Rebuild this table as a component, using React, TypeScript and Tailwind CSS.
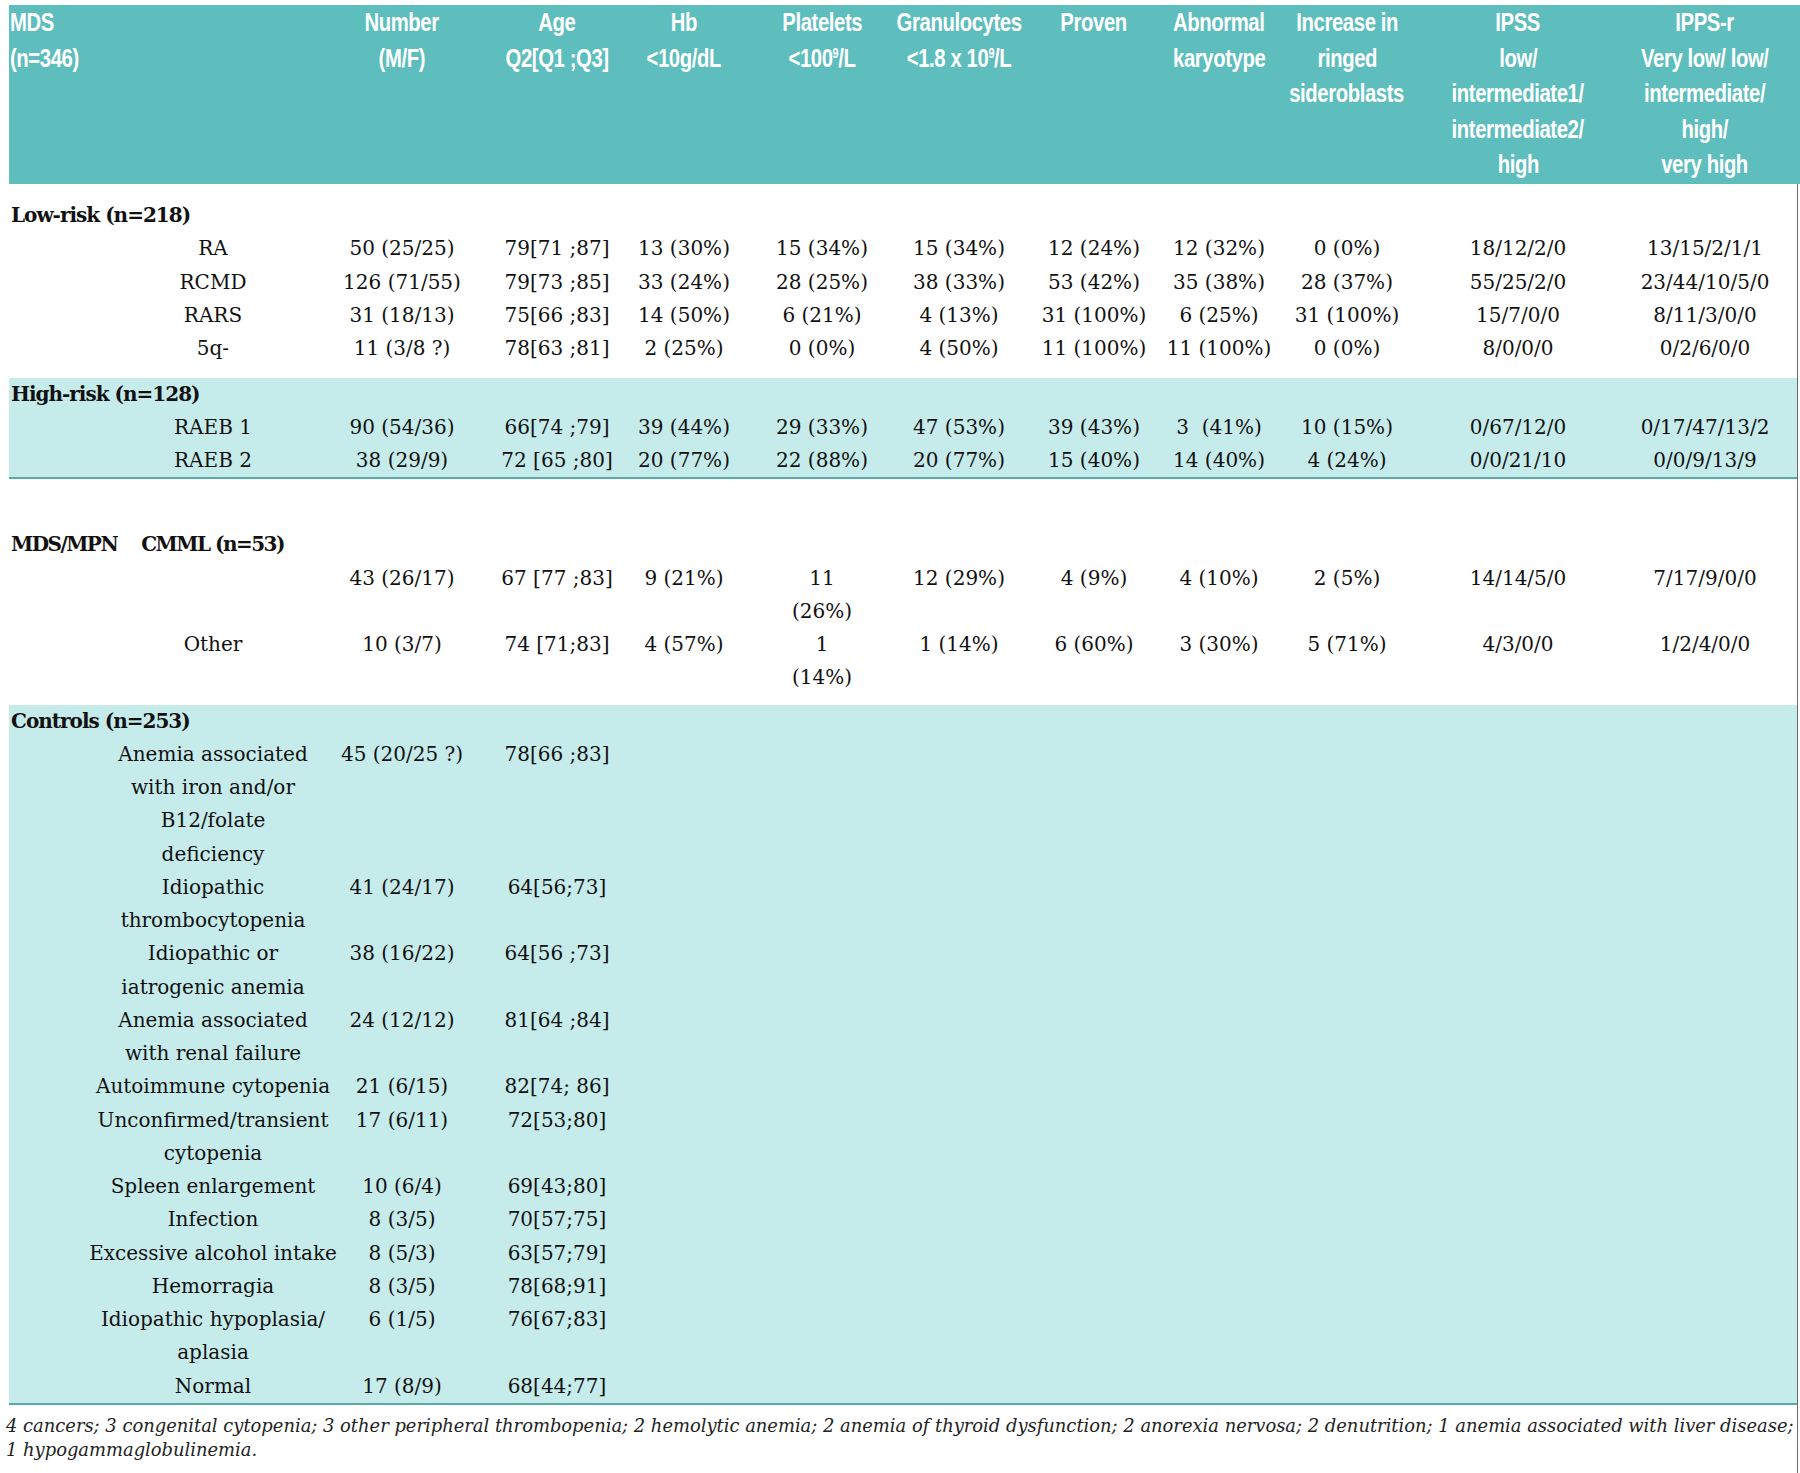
import React from 'react';

type Row = { label: string[]; cells: string[][] };

const HEAD = "font-['Liberation_Sans',Arial,sans-serif]";
const GRID = 'grid grid-cols-[296px_194px_116px_138px_138px_136px_134px_116px_140px_202px_172px]';

const one = (...vals: string[]) => vals.map((v) => [v]);

const lowRisk: Row[] = [
    { label: ['RA'], cells: one('50 (25/25)', '79[71 ;87]', '13 (30%)', '15 (34%)', '15 (34%)', '12 (24%)', '12 (32%)', '0 (0%)', '18/12/2/0', '13/15/2/1/1') },
    { label: ['RCMD'], cells: one('126 (71/55)', '79[73 ;85]', '33 (24%)', '28 (25%)', '38 (33%)', '53 (42%)', '35 (38%)', '28 (37%)', '55/25/2/0', '23/44/10/5/0') },
    { label: ['RARS'], cells: one('31 (18/13)', '75[66 ;83]', '14 (50%)', '6 (21%)', '4 (13%)', '31 (100%)', '6 (25%)', '31 (100%)', '15/7/0/0', '8/11/3/0/0') },
    { label: ['5q-'], cells: one('11 (3/8 ?)', '78[63 ;81]', '2 (25%)', '0 (0%)', '4 (50%)', '11 (100%)', '11 (100%)', '0 (0%)', '8/0/0/0', '0/2/6/0/0') },
];

const highRisk: Row[] = [
    { label: ['RAEB 1'], cells: one('90 (54/36)', '66[74 ;79]', '39 (44%)', '29 (33%)', '47 (53%)', '39 (43%)', '3\u00a0 (41%)', '10 (15%)', '0/67/12/0', '0/17/47/13/2') },
    { label: ['RAEB 2'], cells: one('38 (29/9)', '72 [65 ;80]', '20 (77%)', '22 (88%)', '20 (77%)', '15 (40%)', '14 (40%)', '4 (24%)', '0/0/21/10', '0/0/9/13/9') },
];

const mpn: Row[] = [
    { label: [''], cells: [['43 (26/17)'], ['67 [77 ;83]'], ['9 (21%)'], ['11', '(26%)'], ['12 (29%)'], ['4 (9%)'], ['4 (10%)'], ['2 (5%)'], ['14/14/5/0'], ['7/17/9/0/0']] },
    { label: ['Other'], cells: [['10 (3/7)'], ['74 [71;83]'], ['4 (57%)'], ['1', '(14%)'], ['1 (14%)'], ['6 (60%)'], ['3 (30%)'], ['5 (71%)'], ['4/3/0/0'], ['1/2/4/0/0']] },
];

const controls: Row[] = [
    { label: ['Anemia associated', 'with iron and/or', 'B12/folate', 'deficiency'], cells: one('45 (20/25 ?)', '78[66 ;83]') },
    { label: ['Idiopathic', 'thrombocytopenia'], cells: one('41 (24/17)', '64[56;73]') },
    { label: ['Idiopathic or', 'iatrogenic anemia'], cells: one('38 (16/22)', '64[56 ;73]') },
    { label: ['Anemia associated', 'with renal failure'], cells: one('24 (12/12)', '81[64 ;84]') },
    { label: ['Autoimmune cytopenia'], cells: one('21 (6/15)', '82[74; 86]') },
    { label: ['Unconfirmed/transient', 'cytopenia'], cells: one('17 (6/11)', '72[53;80]') },
    { label: ['Spleen enlargement'], cells: one('10 (6/4)', '69[43;80]') },
    { label: ['Infection'], cells: one('8 (3/5)', '70[57;75]') },
    { label: ['Excessive alcohol intake'], cells: one('8 (5/3)', '63[57;79]') },
    { label: ['Hemorragia'], cells: one('8 (3/5)', '78[68;91]') },
    { label: ['Idiopathic hypoplasia/', 'aplasia'], cells: one('6 (1/5)', '76[67;83]') },
    { label: ['Normal'], cells: one('17 (8/9)', '68[44;77]') },
];

const Lines = ({ lines }: { lines: string[] }) => (
    <div className="flex flex-col items-center">
        {lines.map((l, i) => (
            <div key={i} className="whitespace-nowrap">{l || '\u00a0'}</div>
        ))}
    </div>
);

const DataRows = ({ rows }: { rows: Row[] }) => (
    <>
        {rows.map((row, idx) => (
            <div key={idx} className={`${GRID} items-start`}>
                <div className="pl-[112px]">
                    <Lines lines={row.label} />
                </div>
                {row.cells.map((c, j) => (
                    <Lines key={j} lines={c} />
                ))}
            </div>
        ))}
    </>
);

const Sup = ({ children }: { children: React.ReactNode }) => (
    <span className="relative top-[-9px] text-[14px] leading-none">{children}</span>
);

const headers: React.ReactNode[][] = [
    [<>Number</>, <>(M/F)</>],
    [<>Age</>, <>Q2[Q1 ;Q3]</>],
    [<>Hb</>, <>&lt;10g/dL</>],
    [<>Platelets</>, <>&lt;100<Sup>9</Sup>/L</>],
    [<>Granulocytes</>, <>&lt;1.8 x 10<Sup>9</Sup>/L</>],
    [<>Proven</>],
    [<>Abnormal</>, <>karyotype</>],
    [<>Increase in</>, <>ringed</>, <>sideroblasts</>],
    [<>IPSS</>, <>low/</>, <>intermediate1/</>, <>intermediate2/</>, <>high</>],
    [<>IPPS-r</>, <>Very low/ low/</>, <>intermediate/</>, <>high/</>, <>very high</>],
];

export default function App() {
    return (
        <div className="w-[1800px] h-[1473px] bg-white overflow-hidden text-[#111] font-['DejaVu_Serif',serif] text-[20px]">
            {/* Header */}
            <div className={`mt-[5px] ml-[9px] h-[179px] bg-[#5ebdbd] text-white font-bold text-[26px] leading-[35.5px] tracking-[-0.5px] ${HEAD} ${GRID}`}>
                <div className="pl-[1px]">
                    <div className="whitespace-nowrap origin-left scale-x-[0.78]">MDS</div>
                    <div className="whitespace-nowrap origin-left scale-x-[0.78]">(n=346)</div>
                </div>
                {headers.map((h, i) => (
                    <div key={i} className="flex flex-col items-center">
                        {h.map((line, j) => (
                            <div key={j} className="whitespace-nowrap scale-x-[0.78]">{line}</div>
                        ))}
                    </div>
                ))}
            </div>

            <div className="ml-[9px] w-[1789px] border-r border-[#6b6b6b] leading-[33.25px]">
                {/* Low-risk */}
                <div className="pt-[15px] pb-[13px]">
                    <div className="font-bold tracking-[-1px] pl-[2px]">Low-risk (n=218)</div>
                    <DataRows rows={lowRisk} />
                </div>

                {/* High-risk */}
                <div className="bg-[#c6ebeb] border-b-2 border-[#5aa9a9] leading-[33px]">
                    <div className="font-bold tracking-[-1px] pl-[2px]">High-risk (n=128)</div>
                    <DataRows rows={highRisk} />
                </div>

                {/* MDS/MPN */}
                <div className="pt-[49px] pb-[10px]">
                    <div className="font-bold tracking-[-1.5px] pl-[2px] flex">
                        <span>MDS/MPN</span>
                        <span className="ml-[24px]">CMML (n=53)</span>
                    </div>
                    <DataRows rows={mpn} />
                </div>

                {/* Controls */}
                <div className="bg-[#c6ebeb] border-b-2 border-[#5aa9a9]">
                    <div className="font-bold tracking-[-1px] pl-[2px]">Controls (n=253)</div>
                    <DataRows rows={controls} />
                </div>

                {/* Footnote */}
                <div className="pt-[9px] pb-[30px] -ml-[3px] italic text-[17.9px] leading-[24px] text-[#222]">
                    <div className="whitespace-nowrap">
                        4 cancers; 3 congenital cytopenia; 3 other peripheral thrombopenia; 2 hemolytic anemia; 2 anemia of thyroid dysfunction; 2 anorexia nervosa; 2 denutrition; 1 anemia associated with liver disease;
                    </div>
                    <div>1 hypogammaglobulinemia.</div>
                </div>
            </div>
        </div>
    );
}
